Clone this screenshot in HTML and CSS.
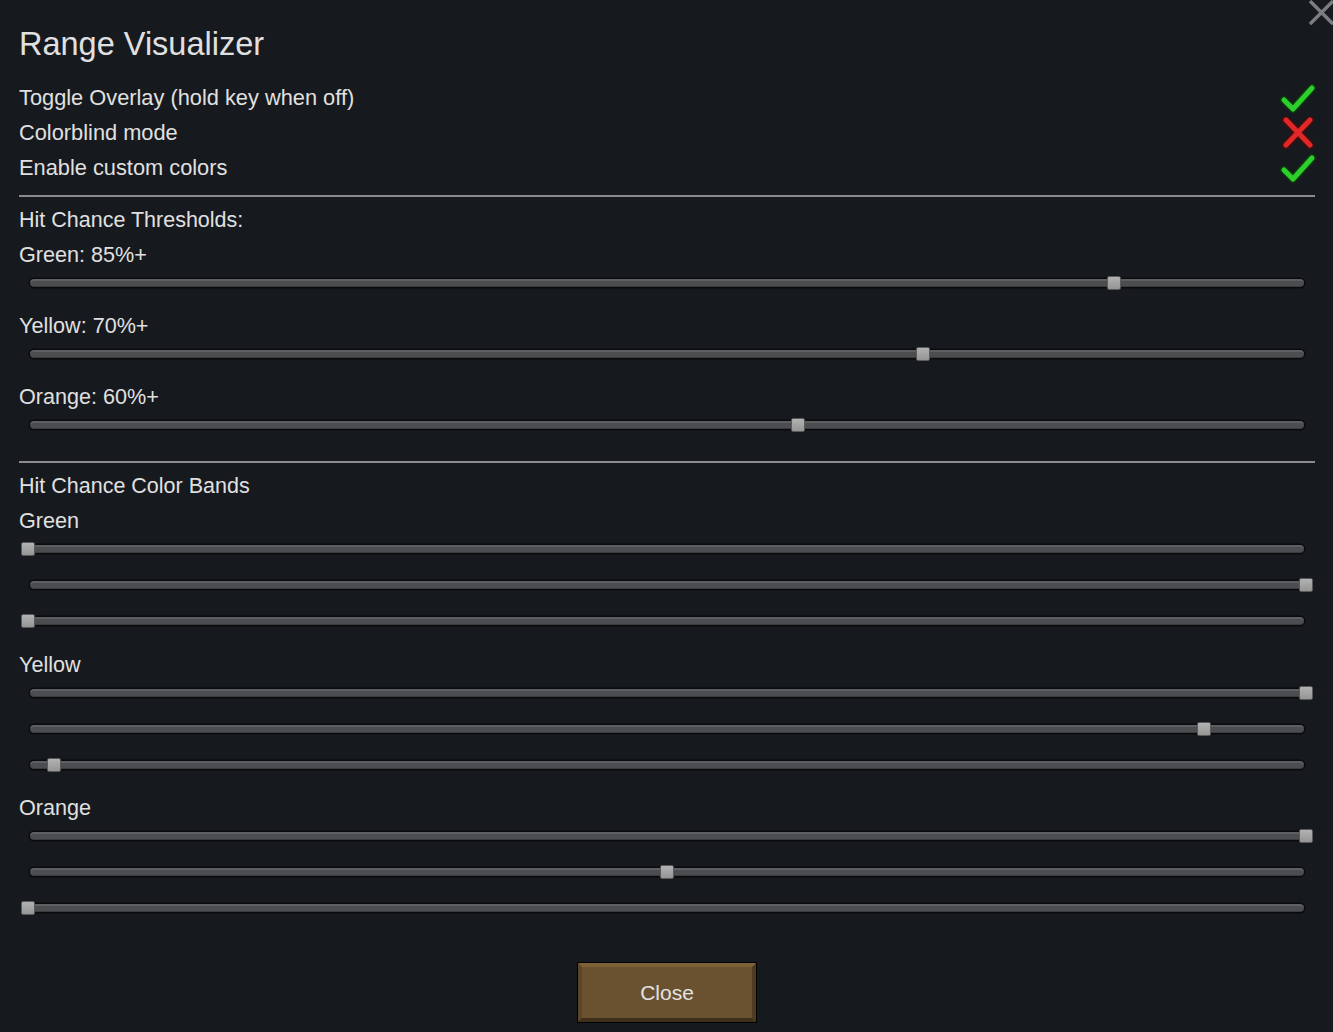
FILE: index.html
```html
<!DOCTYPE html>
<html lang="en">
<head>
  <meta charset="UTF-8">
  <title>Range Visualizer</title>
  <link rel="stylesheet" href="styles.css">
</head>
<body>
  <div class="close-x">
    <svg width="26" height="26" viewBox="0 0 26 26"><path d="M2 1 L25 24 M25 1 L2 24" stroke="#7c7d80" stroke-width="3.4" fill="none"/></svg>
  </div>

  <div class="window">
    <h1 class="title">Range Visualizer</h1>

    <div class="check-row">
      <span>Toggle Overlay (hold key when off)</span>
      <svg class="icon" width="36" height="32" viewBox="0 0 36 32">
        <path d="M4 18 L13 27 L32 6" stroke="#0d3a0d" stroke-width="8" stroke-linecap="round" stroke-linejoin="round" fill="none"/>
        <path d="M4 18 L13 27 L32 6" stroke="#2ccf2c" stroke-width="5" stroke-linecap="round" stroke-linejoin="round" fill="none"/>
      </svg>
    </div>
    <div class="check-row">
      <span>Colorblind mode</span>
      <svg class="icon" width="36" height="32" viewBox="0 0 36 32">
        <path d="M6 3 L30 28 M30 3 L6 28" stroke="#4a0c0c" stroke-width="8" stroke-linecap="round" fill="none"/>
        <path d="M6 3 L30 28 M30 3 L6 28" stroke="#e02828" stroke-width="5" stroke-linecap="round" fill="none"/>
      </svg>
    </div>
    <div class="check-row">
      <span>Enable custom colors</span>
      <svg class="icon" width="36" height="32" viewBox="0 0 36 32">
        <path d="M4 18 L13 27 L32 6" stroke="#0d3a0d" stroke-width="8" stroke-linecap="round" stroke-linejoin="round" fill="none"/>
        <path d="M4 18 L13 27 L32 6" stroke="#2ccf2c" stroke-width="5" stroke-linecap="round" stroke-linejoin="round" fill="none"/>
      </svg>
    </div>

    <hr class="sep">

    <div class="thresholds">
      <div class="section-head">Hit Chance Thresholds:</div>
      <div class="label">Green: 85%+</div>
      <div class="slider"><div class="track"></div><div class="thumb" style="left: calc((100% - 14px) * 0.85)"></div></div>
      <div class="label">Yellow: 70%+</div>
      <div class="slider"><div class="track"></div><div class="thumb" style="left: calc((100% - 14px) * 0.70)"></div></div>
      <div class="label">Orange: 60%+</div>
      <div class="slider"><div class="track"></div><div class="thumb" style="left: calc((100% - 14px) * 0.6025)"></div></div>
    </div>

    <hr class="sep sep-low">

    <div class="bands">
      <div class="section-head">Hit Chance Color Bands</div>
      <div class="label">Green</div>
      <div class="slider"><div class="track"></div><div class="thumb" style="left: calc((100% - 14px) * 0)"></div></div>
      <div class="slider"><div class="track"></div><div class="thumb" style="left: calc((100% - 14px) * 1)"></div></div>
      <div class="slider"><div class="track"></div><div class="thumb" style="left: calc((100% - 14px) * 0)"></div></div>
      <div class="label">Yellow</div>
      <div class="slider"><div class="track"></div><div class="thumb" style="left: calc((100% - 14px) * 1)"></div></div>
      <div class="slider"><div class="track"></div><div class="thumb" style="left: calc((100% - 14px) * 0.92)"></div></div>
      <div class="slider"><div class="track"></div><div class="thumb" style="left: calc((100% - 14px) * 0.02)"></div></div>
      <div class="label">Orange</div>
      <div class="slider"><div class="track"></div><div class="thumb" style="left: calc((100% - 14px) * 1)"></div></div>
      <div class="slider"><div class="track"></div><div class="thumb" style="left: calc((100% - 14px) * 0.5)"></div></div>
      <div class="slider"><div class="track"></div><div class="thumb" style="left: calc((100% - 14px) * 0)"></div></div>
    </div>

    <div class="footer">
      <button class="btn-close">Close</button>
    </div>
  </div>
</body>
</html>
```

FILE: styles.css
```css
html, body {
  margin: 0;
  padding: 0;
  background: #16191e;
  height: 100%;
}
body {
  font-family: "Liberation Sans", Arial, sans-serif;
  color: #e0e0e0;
  position: relative;
  overflow: hidden;
}
.close-x {
  position: absolute;
  top: 0;
  right: -1px;
  width: 26px;
  height: 26px;
}
.close-x svg { display: block; }
.window {
  padding: 26px 18px 0 19px;
}
.title {
  margin: 0;
  font-size: 32.5px;
  font-weight: normal;
  line-height: 36px;
}
.check-row {
  height: 35px;
  display: flex;
  align-items: center;
  justify-content: space-between;
  font-size: 21.8px;
}
.title + .check-row { margin-top: 18px; }
.check-row .icon { margin-right: -1px; display: block; }
.sep {
  border: none;
  height: 2px;
  background: #8a8b8d;
  margin: 10px 0 0 0;
}
.sep-low { margin-top: 12px; }
.section-head {
  font-size: 21.5px;
  line-height: 32px;
  margin-top: 7px;
}
.bands .section-head { margin-top: 6.5px; }
.label {
  font-size: 21.6px;
  line-height: 33px;
  padding-top: 2px;
}
.bands .label { padding-top: 2.5px; }
.slider {
  position: relative;
  height: 36px;
  margin: 0 2px;
}
.track {
  position: absolute;
  left: 9px;
  right: 9px;
  top: 8px;
  height: 5px;
  background: #4c4d50;
  border-top: 2px solid #5e5f62;
  border-bottom: 1px solid #3b3c3e;
  border-radius: 4px;
  box-shadow: 0 0 0 1.5px #0a0b0d;
}
.thumb {
  position: absolute;
  top: 5px;
  width: 12px;
  height: 12px;
  background: linear-gradient(#b2b2b2, #959595);
  border: 1px solid #5a5a5a;
  border-radius: 2px;
}
.footer {
  display: flex;
  justify-content: center;
  margin-top: 31px;
}
.btn-close {
  width: 178px;
  height: 59px;
  font-family: "Liberation Sans", Arial, sans-serif;
  font-size: 21px;
  color: #e2e2e2;
  background: #6a5230;
  border: 4px solid;
  border-color: #7e6136 #4e3c22 #3f301b #5a4529;
  outline: 1px solid #000;
  padding: 0;
}
```
